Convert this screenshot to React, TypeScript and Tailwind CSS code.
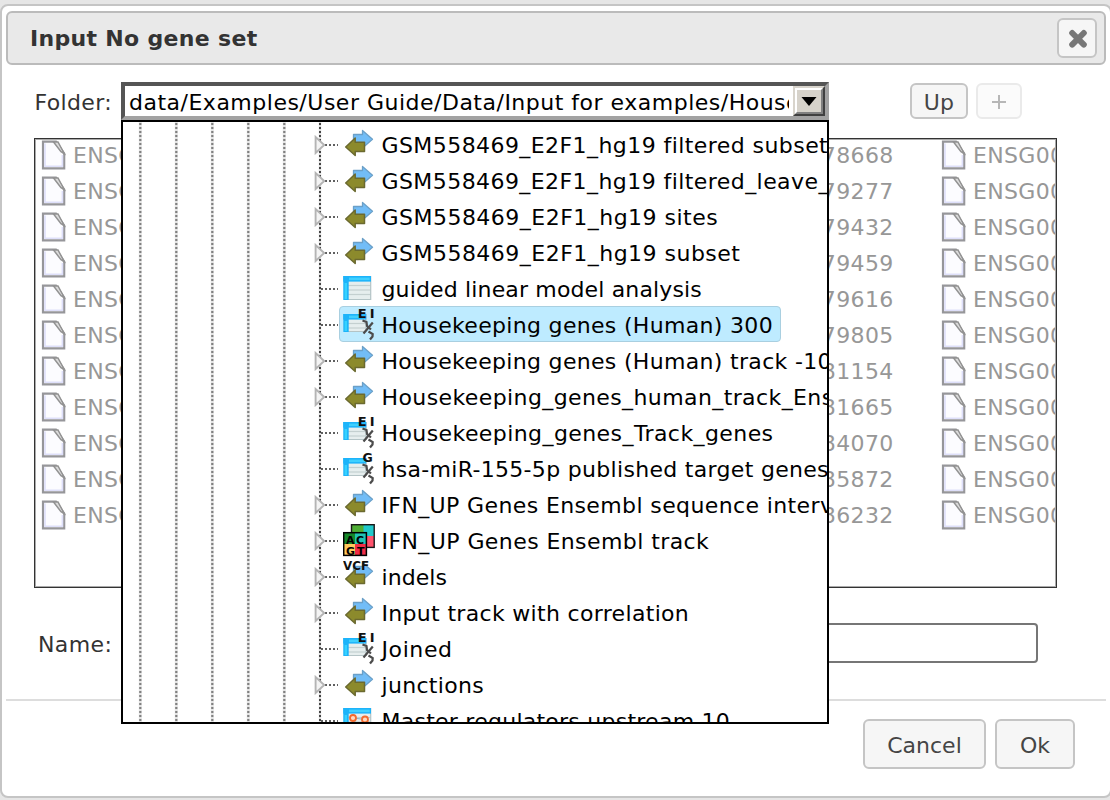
import React from "react";

type Kind = "track" | "table" | "genes" | "geneSymbols" | "sequence" | "vcf" | "regulators";

interface TreeNode {
  label: string;
  kind: Kind;
  tracking: string;
  selected?: boolean;
}

const nodes: TreeNode[] = [
  { label: "GSM558469_E2F1_hg19 filtered subset", kind: "track", tracking: "tracking-[0.43px]" },
  { label: "GSM558469_E2F1_hg19 filtered_leave_one", kind: "track", tracking: "tracking-[0.43px]" },
  { label: "GSM558469_E2F1_hg19 sites", kind: "track", tracking: "tracking-[0.48px]" },
  { label: "GSM558469_E2F1_hg19 subset", kind: "track", tracking: "tracking-[0.48px]" },
  { label: "guided linear model analysis", kind: "table", tracking: "tracking-[0.15px]" },
  { label: "Housekeeping genes (Human) 300", kind: "genes", selected: true, tracking: "tracking-[0.32px]" },
  { label: "Housekeeping genes (Human) track -1000", kind: "track", tracking: "tracking-[0.32px]" },
  { label: "Housekeeping_genes_human_track_Ensembl", kind: "track", tracking: "tracking-[0.4px]" },
  { label: "Housekeeping_genes_Track_genes", kind: "genes", tracking: "tracking-[0.42px]" },
  { label: "hsa-miR-155-5p published target genes", kind: "geneSymbols", tracking: "tracking-[0.31px]" },
  { label: "IFN_UP Genes Ensembl sequence intervals", kind: "track", tracking: "tracking-[0.38px]" },
  { label: "IFN_UP Genes Ensembl track", kind: "sequence", tracking: "tracking-[0.42px]" },
  { label: "indels", kind: "vcf", tracking: "tracking-[0.05px]" },
  { label: "Input track with correlation", kind: "track", tracking: "tracking-[0.32px]" },
  { label: "Joined", kind: "genes", tracking: "tracking-[0.6px]" },
  { label: "junctions", kind: "track", tracking: "tracking-[0.3px]" },
  { label: "Master regulators upstream 10", kind: "regulators", tracking: "tracking-[0.25px]" },
];

const geneIds = ["78668", "79277", "79432", "79459", "79616", "79805", "81154", "81665", "84070", "85872", "86232"];

function Arrows() {
  return (
    <g strokeLinejoin="round">
      <path d="M10.5 8.5h9V4.5l10 8.7-10 8.8v-4h-9z" fill="#72bdf7" stroke="#6ba0c8" strokeWidth="1.3" />
      <path d="M2.7 21l9.5-9v4.3h9.3v9.2h-9.3v4z" fill="#8c8a2c" stroke="#6b6a30" strokeWidth="1.5" />
    </g>
  );
}

function Table({ w, h, y }: { w: number; h: number; y: number }) {
  return (
    <g>
      <rect x="0.3" y={y} width={w} height={h} fill="#e6eeee" />
      {[9.5, 14, 18.5].filter((d) => d < h - 3).map((d) => (
        <path key={d} d={`M5 ${y + d}h${w - 5}`} stroke="#c4d0d0" strokeWidth="1.2" />
      ))}
      <path d={`M${w} ${y}v${h}M5 ${y + h - 0.5}h${w - 5}`} stroke="#b4c4c6" strokeWidth="1.2" />
      <rect x="0.3" y={y} width={w} height="5.6" fill="#1db4fa" />
      <rect x="0.3" y={y} width="5.4" height={h} fill="#1db4fa" />
      <rect x="6" y={y + 1.6} width={w - 7} height="2.5" fill="#3fd0ff" />
      <path d={`M2.8 ${y + 7}v${h - 8}`} stroke="#35d2ff" strokeWidth="2.4" />
    </g>
  );
}

function Strand() {
  return (
    <path
      d="M19.5 14.5l4 1.5.5 4 4 3.5M29.8 16.5L20.5 27.5M25.5 25.5l4.2 2.5-.2 2.5-2.5 3"
      fill="none"
      stroke="#4c4c4c"
      strokeWidth="2.2"
    />
  );
}

function NodeIcon({ kind }: { kind: Kind }) {
  return (
    <svg width="34" height="36" viewBox="0 0 34 36" className="shrink-0 font-['DejaVu_Sans',sans-serif] font-bold tracking-normal">
      {(kind === "track" || kind === "vcf") && <Arrows />}
      {kind === "table" && <Table w={27.7} h={24} y={6} />}
      {(kind === "genes" || kind === "geneSymbols") && (
        <>
          <Table w={23} h={18} y={8} />
          <Strand />
          {kind === "genes" ? (
            <text x="14.8 26.8" y="11.8" fontSize="13" fill="#111">EI</text>
          ) : (
            <text x="19.6" y="11.8" fontSize="12.5" fill="#111">G</text>
          )}
        </>
      )}
      {kind === "sequence" && (
        <>
          <rect x="8.5" y="2.7" width="22.7" height="22.7" fill="#20c9cb" />
          <rect x="8.5" y="2.7" width="12" height="11" fill="#4fae35" />
          <rect x="20" y="14" width="11" height="11.5" fill="#ff526c" />
          <rect x="8.5" y="2.7" width="22.7" height="22.7" fill="none" stroke="#181818" strokeWidth="1.4" />
          <rect x="0.7" y="10.7" width="11.3" height="11.3" fill="#15882a" />
          <rect x="12" y="10.7" width="11.3" height="11.3" fill="#20c4b5" />
          <rect x="0.7" y="22" width="11.3" height="11.3" fill="#ffca5c" />
          <rect x="12" y="22" width="11.3" height="11.3" fill="#f22d46" />
          <rect x="0.7" y="10.7" width="22.7" height="22.7" fill="none" stroke="#000" strokeWidth="1.5" />
          <g fontSize="11" fill="#000">
            <text x="3" y="21.5">A</text>
            <text x="13" y="21.5">C</text>
            <text x="3" y="32.5">G</text>
            <text x="14" y="32.5">T</text>
          </g>
        </>
      )}
      {kind === "vcf" && (
        <text x="0" y="11.8" fontSize="13" textLength="26" lengthAdjust="spacingAndGlyphs" fill="#111">VCF</text>
      )}
      {kind === "regulators" && (
        <>
          <Table w={27.7} h={24} y={6} />
          <path d="M10 16l12 1.5M12 19l-2 8" stroke="#8fb0c0" />
          <circle cx="10" cy="16" r="3" fill="#ffd9c0" stroke="#f26a2e" strokeWidth="1.8" />
          <circle cx="22" cy="17.5" r="3" fill="#ffd9c0" stroke="#f26a2e" strokeWidth="1.8" />
        </>
      )}
    </svg>
  );
}

function Guides({ height }: { height: number }) {
  return (
    <svg width="216" height={height} className="block shrink-0">
      {[17.3, 53.3, 89.3, 125.3, 161.3].map((x) => (
        <g key={x}>
          <path d={`M${x} 0V${height}`} stroke="#e4e4e4" strokeWidth="3" />
          <path d={`M${x} 1V${height}`} stroke="#808080" strokeWidth="2.2" strokeDasharray="2 2" />
        </g>
      ))}
      <path d={`M197 0V${height}`} stroke="#dedede" strokeWidth="2.4" />
      <path d={`M197 1V${height}`} stroke="#444" strokeWidth="2" strokeDasharray="2 2" />
      {height > 10 && <path d="M198 19H215" stroke="#606060" strokeWidth="2" strokeDasharray="2 2" />}
    </svg>
  );
}

function Branch({ expandable }: { expandable: boolean }) {
  return (
    <div className="relative h-9 w-[216px] shrink-0">
      <Guides height={36} />
      {expandable && (
        <svg width="12" height="20" viewBox="0 0 12 20" className="absolute left-[191px] top-[9px]">
          <path d="M1.6 2v16L10.2 10z" fill="#f4f4f4" stroke="#b4b4b4" strokeWidth="1.9" />
        </svg>
      )}
    </div>
  );
}

function FileIcon() {
  return (
    <svg width="26" height="30" viewBox="0 0 26 30" className="shrink-0">
      <path d="M2 1.6H15l8.2 12v14.8H2z" fill="#fcfcff" stroke="#96969a" strokeWidth="2.2" />
      <path d="M4 3.4v22.9h17.4V15" fill="none" stroke="#dedffa" strokeWidth="1.6" />
      <path d="M12.5 2h4.5l6.2 11.5-3.2-1.8z" fill="#dcdcdc" stroke="#929292" strokeWidth="1.5" />
    </svg>
  );
}

function Gene({ id }: { id: string }) {
  return (
    <div className="flex h-9 w-[300px] shrink-0 items-center gap-[6px] text-[#979797]">
      <FileIcon />
      <span className="pt-[2px] tracking-[0.35px]">{"ENSG000000" + id}</span>
    </div>
  );
}

const button = "flex items-center justify-center rounded-[6px] border-2 border-[#c5c5c5] bg-[#f6f6f6] text-[#454545]";

export default function App() {
  return (
    <div className="h-[800px] w-[1110px] overflow-hidden bg-[#e6e6e6] pt-1 font-['DejaVu_Sans','Verdana',sans-serif] text-[22px] leading-[26px] text-[#333]">
      <div className="flex h-[794px] w-[1112px] flex-col rounded-[8px] border-2 border-[#c5c5c5] bg-white p-1 pt-[5px]">
        <header className="flex h-[54px] w-[1100px] shrink-0 items-center justify-between rounded-[6px] border-2 border-[#bbb] bg-[#e9e9e9] pl-[22px] pr-[7px]">
          <h1 className="pt-[2px] text-[22px] font-bold tracking-[0.32px]">Input No gene set</h1>
          <button className="flex h-10 w-10 items-center justify-center rounded-[6px] border-2 border-[#c5c5c5] bg-[#f6f6f6]">
            <svg width="20" height="20" viewBox="0 0 20 20" className="ml-px">
              <path d="M4.2 5l11.6 11.6M15.8 5L4.2 16.6" stroke="#777" strokeWidth="6" strokeLinecap="round" />
            </svg>
          </button>
        </header>

        <div className="mt-[17px] flex h-[38px] shrink-0 items-start pl-7">
          <label className="w-[87px] pl-[0.5px] pt-2 text-[22px] tracking-[0.35px]">Folder:</label>
          <div className="relative z-10 w-[708px]">
            <div className="flex h-[38px] border-4 border-b-[#a2a2a2] border-l-[#555] border-r-[#a2a2a2] border-t-[#555] bg-white text-black">
              <div className="mr-1 w-[664px] overflow-hidden whitespace-nowrap pl-1 pt-1 tracking-[0.5px]">
                data/Examples/User Guide/Data/Input for examples/Housekeeping
              </div>
              <div className="flex h-[30px] w-8 shrink-0 items-center justify-center border-2 border-b-[#404040] border-l-[#d8d4cc] border-r-[#404040] border-t-[#d8d4cc]">
                <div className="flex h-full w-full items-center justify-center border-2 border-b-[#808080] border-l-white border-r-[#808080] border-t-white bg-[#d6d2ca]">
                  <svg width="16" height="9" viewBox="0 0 16 9" className="-ml-px mt-px shrink-0"><path d="M0.5 0h15L8 9z" fill="#000" /></svg>
                </div>
              </div>
            </div>
            <div className="absolute left-0 top-[38px] h-[604px] w-[708px] overflow-hidden border-2 border-black bg-white text-black">
              <Guides height={4} />
              {nodes.map((n) => (
                <div key={n.label} className="flex h-9 w-max items-center">
                  <Branch expandable={["track", "vcf", "sequence"].includes(n.kind)} />
                  <div
                    className={
                      n.selected
                        ? "flex h-9 items-center rounded-[4px] border border-[#a9cfe0] bg-[#beebff] pl-[3px] pr-[7px]"
                        : "flex h-9 items-center border border-transparent pl-[3px] pr-[7px]"
                    }
                  >
                    <NodeIcon kind={n.kind} />
                    <span className={`ml-[4.5px] whitespace-nowrap pt-1 ${n.tracking}`}>{n.label}</span>
                  </div>
                </div>
              ))}
            </div>
          </div>
          <div className="ml-[81px] mt-px flex gap-2">
            <button className={`${button} h-9 w-[58px] pt-[3px] tracking-[0.2px]`}>Up</button>
            <button className={`${button} h-9 w-[46px] opacity-35`}>
              <svg width="16" height="16" viewBox="0 0 16 16" className="mt-[2px]"><path d="M8 1v14M1 8h14" stroke="#333" strokeWidth="2" /></svg>
            </button>
          </div>
        </div>

        <div className="ml-7 mt-[18px] h-[450px] w-[1023px] shrink-0 overflow-hidden border-[1px] border-[#333] pl-[6px] outline outline-1 -outline-offset-2 outline-[#aaa]">
          <div className="-mt-[2px]">
            {geneIds.map((id) => (
              <div key={id} className="flex">
                <Gene id={id} />
                <Gene id={id} />
                <Gene id={id} />
                <Gene id={id} />
              </div>
            ))}
          </div>
        </div>

        <div className="mt-[35px] flex h-10 shrink-0 items-center pl-8">
          <label className="w-[83px] pt-[3px] text-[22px] tracking-[0.4px]">Name:</label>
          <input className="h-10 w-[917px] rounded-[4px] border-2 border-[#767676] bg-white outline-none" />
        </div>

        <footer className="mt-9 flex w-[1100px] justify-end gap-[9px] border-t-2 border-[#ddd] pr-[31px] pt-[18px]">
          <button className={`${button} h-[50px] w-[123px] pt-[3px]`}>Cancel</button>
          <button className={`${button} h-[50px] w-20 pt-[3px]`}>Ok</button>
        </footer>
      </div>
    </div>
  );
}
